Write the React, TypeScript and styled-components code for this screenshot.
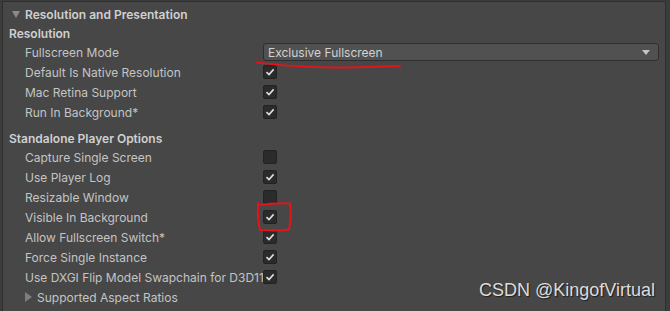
import styled, { createGlobalStyle } from 'styled-components';

const GlobalStyle = createGlobalStyle`
  html, body {
    margin: 0;
    padding: 0;
    background: #3c3c3c;
  }
  body {
    font-family: Inter, "Noto Sans", "Liberation Sans", sans-serif;
    font-size: 12px;
    color: #c4c4c4;
  }
`;

const Page = styled.div`
  position: relative;
  width: 670px;
  height: 311px;
  overflow: hidden;
  background: #3c3c3c;
`;

const Panel = styled.div`
  margin-left: 2px;
  width: 664px;
  height: 310px;
  margin-top: 1px;
  box-sizing: border-box;
  background: #474747;
  border: 1px solid #2f2f2f;
  border-bottom: none;
  padding-top: 2px;
`;

const Foldout = styled.div`
  display: flex;
  align-items: center;
  gap: 5px;
  height: 20px;
  padding-left: 9px;
  font-weight: 600;
  color: #d0d0d0;
`;

const Arrow = styled.span<{ open?: boolean }>`
  width: 0;
  height: 0;
  ${(p) =>
    p.open
      ? `
    border-left: 4px solid transparent;
    border-right: 4px solid transparent;
    border-top: 7px solid #8a8a8a;
  `
      : `
    border-top: 5px solid transparent;
    border-bottom: 5px solid transparent;
    border-left: 7px solid #7e7e7e;
  `}
`;

const SectionTitle = styled.div<{ gapTop?: number }>`
  display: flex;
  align-items: center;
  height: 18px;
  padding-left: 6px;
  margin-top: ${(p) => p.gapTop ?? 0}px;
  font-weight: 600;
  color: #d0d0d0;
`;

const Row = styled.div`
  display: grid;
  grid-template-columns: 238px 1fr;
  align-items: center;
  height: 20px;
  padding-left: 22px;
`;

const Label = styled.span`
  white-space: nowrap;
`;

const SubFoldout = styled.div`
  display: flex;
  align-items: center;
  gap: 5px;
  height: 20px;
  padding-left: 22px;
`;

const Box = styled.span`
  display: flex;
  align-items: center;
  justify-content: center;
  width: 12px;
  height: 12px;
  background: #2b2b2b;
  border: 1px solid #222;
  border-radius: 2px;
`;

const Dropdown = styled.div`
  display: flex;
  align-items: center;
  justify-content: space-between;
  height: 18px;
  width: 396px;
  box-sizing: border-box;
  padding: 0 8px 0 4px;
  background: #515151;
  border: 1px solid #2e2e2e;
  border-radius: 3px;
  color: #d2d2d2;
`;

const DropArrow = styled.span`
  width: 0;
  height: 0;
  border-left: 4px solid transparent;
  border-right: 4px solid transparent;
  border-top: 5px solid #c4c4c4;
`;

const Overlay = styled.svg`
  position: absolute;
  left: 0;
  top: 0;
  pointer-events: none;
`;

const Watermark = styled.div`
  position: absolute;
  right: 15px;
  bottom: 10px;
  font-family: "Liberation Sans", Arial, sans-serif;
  font-size: 18px;
  color: #dcdcdc;
  text-shadow: 1px 1px 1px #1e1e1e;
`;

function Checkbox({ checked }: { checked?: boolean }) {
  return (
    <Box>
      {checked && (
        <svg width="10" height="10" viewBox="0 0 10 10">
          <path d="M1.5 5.2 L4 7.6 L8.6 2.4" fill="none" stroke="#dedede" strokeWidth="1.6" />
        </svg>
      )}
    </Box>
  );
}

const resolution: [string, boolean][] = [
  ['Default Is Native Resolution', true],
  ['Mac Retina Support', true],
  ['Run In Background*', true],
];

const standalone: [string, boolean][] = [
  ['Capture Single Screen', false],
  ['Use Player Log', true],
  ['Resizable Window', false],
  ['Visible In Background', true],
  ['Allow Fullscreen Switch*', true],
  ['Force Single Instance', true],
  ['Use DXGI Flip Model Swapchain for D3D11', true],
];

export default function App() {
  return (
    <Page>
      <GlobalStyle />
      <Panel>
        <Foldout>
          <Arrow open />
          Resolution and Presentation
        </Foldout>
        <SectionTitle>Resolution</SectionTitle>
        <Row>
          <Label>Fullscreen Mode</Label>
          <Dropdown>
            Exclusive Fullscreen
            <DropArrow />
          </Dropdown>
        </Row>
        {resolution.map(([label, on]) => (
          <Row key={label}>
            <Label>{label}</Label>
            <Checkbox checked={on} />
          </Row>
        ))}
        <SectionTitle gapTop={7}>Standalone Player Options</SectionTitle>
        {standalone.map(([label, on]) => (
          <Row key={label}>
            <Label>{label}</Label>
            <Checkbox checked={on} />
          </Row>
        ))}
        <SubFoldout>
          <Arrow />
          Supported Aspect Ratios
        </SubFoldout>
      </Panel>
      <Overlay width="670" height="311">
        <path
          d="M257 62.5 C 280 65, 300 67.5, 330 67.5 C 360 67.5, 385 66.5, 400 66"
          fill="none"
          stroke="#e4141a"
          strokeWidth="2"
          strokeLinecap="round"
        />
        <path
          d="M259 205 C 270 203.5, 282 203, 290 203.5 C 291.5 212, 290.5 222, 289 229.5 C 280 231, 268 230.5, 260 230 C 258 222, 257.5 212, 258 203"
          fill="none"
          stroke="#e4141a"
          strokeWidth="2"
          strokeLinecap="round"
          strokeLinejoin="round"
        />
      </Overlay>
      <Watermark>CSDN @KingofVirtual</Watermark>
    </Page>
  );
}
